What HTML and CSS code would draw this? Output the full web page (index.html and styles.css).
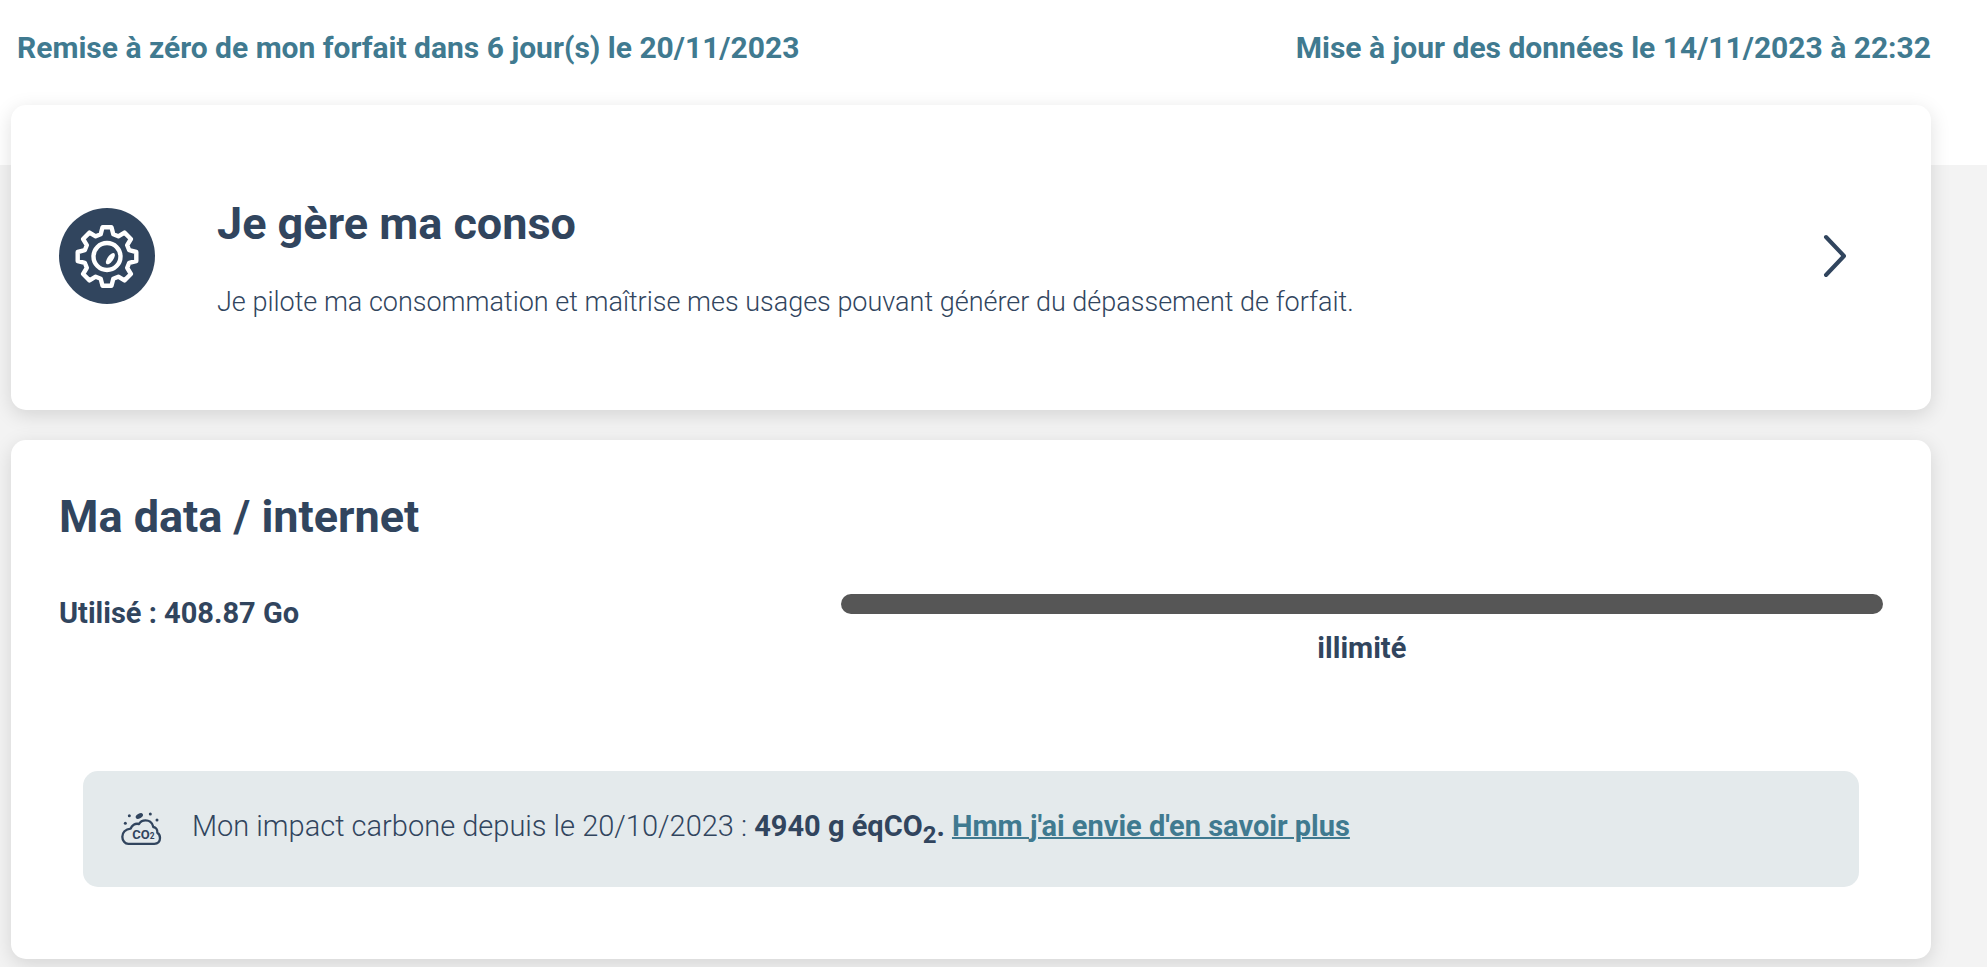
FILE: index.html
```html
<!DOCTYPE html>
<html lang="fr">
<head>
    <meta charset="UTF-8">
    <meta name="viewport" content="width=device-width, initial-scale=1.0">
    <title>Suivi conso</title>
    <link rel="stylesheet" href="styles.css">
</head>
<body>
    <header class="dates">
        <p>Remise à zéro de mon forfait dans 6 jour(s) le 20/11/2023</p>
        <p>Mise à jour des données le 14/11/2023 à 22:32</p>
    </header>

    <main class="container">
        <a class="card card-link" href="#">
            <svg class="icon-gear" viewBox="0 0 96 96" aria-hidden="true">
                <circle cx="48" cy="48" r="48" fill="#31455e"/>
                <g transform="translate(48 48.5)" fill="none" stroke="#fff" stroke-width="4.4" stroke-linejoin="round">
                    <path d="M-4.5-29.3H4.5L6.3-22.2L11.3-20.2L17.5-23.9L23.9-17.5L20.2-11.3L22.2-6.3L29.3-4.5V4.5L22.2 6.3L20.2 11.3L23.9 17.5L17.5 23.9L11.3 20.2L6.3 22.2L4.5 29.3H-4.5L-6.3 22.2L-11.3 20.2L-17.5 23.9L-23.9 17.5L-20.2 11.3L-22.2 6.3L-29.3 4.5V-4.5L-22.2-6.3L-20.2-11.3L-23.9-17.5L-17.5-23.9L-11.3-20.2L-6.3-22.2Z"/>
                    <circle r="13.5"/>
                    <ellipse cx="3.4" cy="2.2" rx="2.9" ry="6.6" transform="rotate(35 3.4 2.2)" fill="#fff" stroke="none"/>
                </g>
            </svg>
            <div class="card-text">
                <h2>Je gère ma conso</h2>
                <p>Je pilote ma consommation et maîtrise mes usages pouvant générer du dépassement de forfait.</p>
            </div>
            <svg class="icon-arrow" viewBox="0 0 24 44" aria-hidden="true">
                <path d="M3 3L21 22L3 41" fill="none" stroke="#31455e" stroke-width="4" stroke-linecap="round" stroke-linejoin="round"/>
            </svg>
        </a>

        <section class="card card-data">
            <h2>Ma data / internet</h2>
            <div class="usage">
                <p class="used">Utilisé : 408.87 Go</p>
                <div class="quota">
                    <div class="quota-bar"></div>
                    <p>illimité</p>
                </div>
            </div>
            <div class="carbon">
                <svg class="icon-co2" viewBox="33 33 123 105" aria-hidden="true">
                    <path d="M55 131.5H133C144 131.5 150 124 150 114C150 106 147 101 142 98C143 88 137 82 130 81C127 66 115 61 107 61C98 61 90 66 87 72C75 69 65 76 62 86C46 87 37 98 37 110C37 122 45 131.5 55 131.5Z" fill="none" stroke="#31455e" stroke-width="7" stroke-linejoin="round"/>
                    <ellipse cx="88" cy="48" rx="12" ry="7" transform="rotate(-32 88 48)"/>
                    <circle cx="58" cy="47" r="4.5"/>
                    <circle cx="46" cy="70" r="4.5"/>
                    <circle cx="121" cy="42" r="4.5"/>
                    <circle cx="141" cy="60" r="4.5"/>
                    <text x="67" y="118" font-size="39">CO</text>
                    <text x="119" y="118" font-size="25">2</text>
                </svg>
                <p>Mon impact carbone depuis le 20/10/2023 : <strong>4940 g éqCO<sub>2</sub>.</strong> <a href="#">Hmm j'ai envie d'en savoir plus</a></p>
            </div>
        </section>
    </main>
</body>
</html>
```
FILE: styles.css
```css
* {
    box-sizing: border-box;
}

body {
    margin: 0;
    background-color: #f3f3f3;
    color: #31455e;
    font-family: Roboto, "Liberation Sans", sans-serif;
    font-size: 29px;
    line-height: 34px;
}

h2,
p {
    margin: 0;
}

h2 {
    font-size: 45px;
    font-weight: 700;
    line-height: 55px;
}

.dates {
    display: flex;
    justify-content: space-between;
    padding: 30px 56px 99px 17px;
    background-color: #fff;
    color: #407a90;
    font-size: 30px;
    font-weight: 700;
    line-height: 36px;
}

/* la première carte remonte sur le bandeau blanc */
.container {
    display: flex;
    flex-direction: column;
    gap: 30px;
    margin: -60px 56px 0 11px;
    padding-bottom: 8px;
}

.card {
    border-radius: 15px;
    background-color: #fff;
    box-shadow: 0 5px 20px rgba(0, 0, 0, 0.13);
}

.card-link {
    display: flex;
    align-items: center;
    gap: 62px;
    padding: 88px 84px 91px 48px;
    color: inherit;
    text-decoration: none;
}

.card-text {
    flex: 1;
    padding-top: 3px;
}

.card-text p {
    margin-top: 34px;
    font-size: 27px;
    font-weight: 300;
}

.icon-gear {
    width: 96px;
    height: 96px;
}

.icon-arrow {
    width: 24px;
    height: 44px;
}

.card-data {
    padding: 49px 48px 72px;
}

.usage {
    display: grid;
    grid-template-columns: 3fr 4fr;
    margin-top: 50px;
    font-weight: 700;
}

.used {
    padding-top: 2px;
}

.quota {
    text-align: center;
}

.quota-bar {
    height: 20px;
    margin-bottom: 17px;
    border-radius: 10px;
    background-color: #565656;
}

.carbon {
    display: flex;
    align-items: end;
    gap: 30px;
    margin: 106px 24px 0;
    padding: 35px 38px 41px;
    border-radius: 15px;
    background-color: #e4eaec;
    font-weight: 300;
    line-height: 40px;
}

.carbon strong,
.carbon a {
    font-weight: 700;
}

.carbon a {
    color: #407a90;
    text-decoration-thickness: 2px;
}

.carbon sub {
    font-size: 24px;
    line-height: 0;
}

.icon-co2 {
    width: 41px;
    height: 35px;
    fill: #31455e;
    font-weight: 700;
}
```
